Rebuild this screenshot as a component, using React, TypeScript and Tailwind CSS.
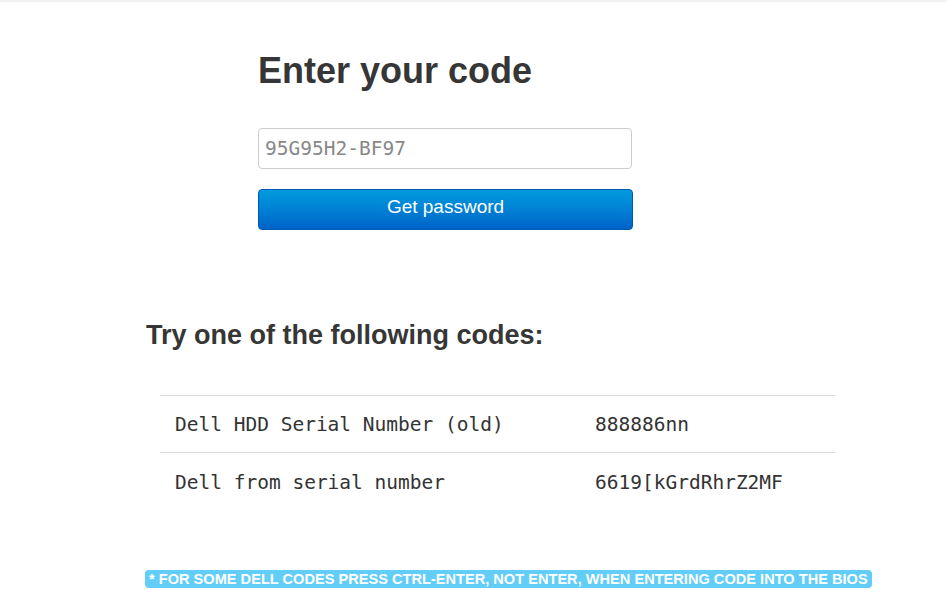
const rows = [
  { name: "Dell HDD Serial Number (old)", code: "888886nn" },
  { name: "Dell from serial number", code: "6619[kGrdRhrZ2MF" },
];

export default function App() {
  return (
    <div className="min-h-[593px] bg-white font-['Liberation_Sans',Arial,sans-serif] text-[#363636]">
      <div className="h-[2px] bg-[#f2f2f2]" />
      <div className="pl-[258px] pt-[49px]">
        <h1 className="text-[36px] leading-[40px] font-bold">Enter your code</h1>
        <input
          className="mt-[37px] block w-[374px] h-[41px] rounded-[4px] border border-[#cccccc] px-[6px] font-['DejaVu_Sans_Mono',monospace] text-[19.5px] text-[#555] placeholder:text-[#888] outline-none"
          placeholder="95G95H2-BF97"
        />
        <button className="mt-[20px] block w-[375px] h-[41px] pb-[5px] rounded-[4px] border border-[#0058b0] bg-gradient-to-b from-[#049cde] to-[#0063c9] text-white text-[19px] leading-[24px]">
          Get password
        </button>
      </div>
      <div className="pl-[146px] pt-[89px]">
        <h2 className="text-[27px] leading-[32px] font-bold">Try one of the following codes:</h2>
      </div>
      <div className="pl-[160px] pt-[44px]">
        <table className="w-[675px] font-['DejaVu_Sans_Mono',monospace] text-[19.5px] text-[#333]">
          <tbody>
            {rows.map((r) => (
              <tr key={r.name} className="border-t border-[#dddddd] h-[57px]">
                <td className="pl-[15px] pt-[2px] w-[435px]">{r.name}</td>
                <td className="pt-[2px]">{r.code}</td>
              </tr>
            ))}
          </tbody>
        </table>
      </div>
      <div className="pl-[145px] pt-[57px]">
        <span className="inline-block rounded-[4px] bg-[#62cdf6] px-[4px] text-[14.6px] leading-[18px] font-bold text-white">
          * FOR SOME DELL CODES PRESS CTRL-ENTER, NOT ENTER, WHEN ENTERING CODE INTO THE BIOS
        </span>
      </div>
    </div>
  );
}
